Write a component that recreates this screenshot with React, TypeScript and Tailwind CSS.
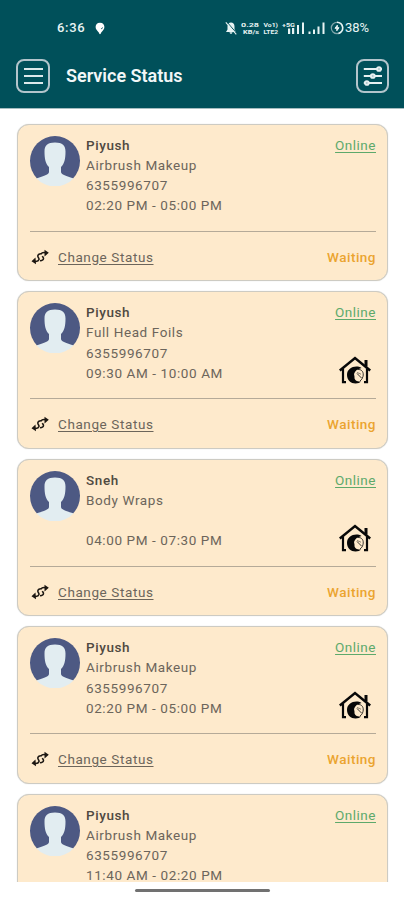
type Booking = {
  name: string;
  service: string;
  phone: string;
  time: string;
  home: boolean;
  status?: string;
};

const bookings: Booking[] = [
  { name: "Piyush", service: "Airbrush Makeup", phone: "6355996707", time: "02:20 PM - 05:00 PM", home: false, status: "Waiting" },
  { name: "Piyush", service: "Full Head Foils", phone: "6355996707", time: "09:30 AM - 10:00 AM", home: true, status: "Waiting" },
  { name: "Sneh", service: "Body Wraps", phone: "", time: "04:00 PM - 07:30 PM", home: true, status: "Waiting" },
  { name: "Piyush", service: "Airbrush Makeup", phone: "6355996707", time: "02:20 PM - 05:00 PM", home: true, status: "Waiting" },
  { name: "Piyush", service: "Airbrush Makeup", phone: "6355996707", time: "11:40 AM - 02:20 PM", home: false },
];

const Avatar = () => (
  <svg viewBox="0 0 50 50" className="h-[50px] w-[50px] shrink-0" aria-hidden="true">
    <path d="M7 42.400A25 25 0 1 1 43 42.400z" fill="#4d5983" />
    <path
      d="M25 6.500c7.500 0 10.500 2.800 10.500 9 0 7.500-1 12-4.500 15.500v5c0 3 7 4.500 12.500 6.400A25.300 25.300 0 0 1 6.500 42.400C12 40.500 19 39 19 36v-5c-3.500-3.500-4.500-8-4.500-15.500 0-6.200 3-9 10.500-9z"
      fill="#e2edf1"
    />
  </svg>
);

const SwapIcon = () => (
  <svg viewBox="0 0 20 16" className="h-4 w-5 shrink-0" fill="none" stroke="#1c1712" aria-hidden="true">
    <path
      d="M3 12c3 .8 5.500.2 6-1.500.4-1.400-1.400-2-1.200-3.600.2-1.500 1.700-2.300 3.400-2M17 4c-3-.8-5.400-.3-6 1.200M10 11.600c1.800.2 3.400-.6 3.500-2 .1-1-.7-1.500-1.200-2.500"
      strokeWidth="1.500"
    />
    <path d="M5.500 8.500 1.500 12.300 6 15.200zM14.500.8l4.300 3-4.300 3.700z" fill="#1c1712" stroke="none" />
  </svg>
);

const HomeServiceIcon = () => (
  <svg viewBox="0 0 32 28" className="h-7 w-8" fill="none" stroke="#080808" aria-hidden="true">
    <path d="M.8 14.500 16 2l15.200 12.500" strokeWidth="2.500" />
    <path d="M4 12.500v13.700h3M28 12.500v13.700h-3" strokeWidth="2.200" />
    <path d="M27 10.500V4" strokeWidth="3" />
    <path
      d="M22.500 12C17 8.500 8 11.500 8 19c0 5 4 8.500 8.500 8.500 2.500 0 4.500-.8 5.500-2-4 .2-6.800-1.500-6.500-4.300.2-1.500-.8-2.200-.3-3.700.8-2.700 3.500-4.500 7.300-5.500z"
      fill="#080808"
      stroke="none"
    />
    <path d="M18.500 13.500c4.500-.5 6.500 3 5.500 7-.5 2-1.500 3.500-3 4.500M18 17.500l4.500 4.500" strokeWidth=".8" />
    <path d="M18 16.500c1.500 1 3 .5 4 2" strokeWidth=".7" stroke="#4c463e" />
  </svg>
);

const StatusBar = () => (
  <div className="flex h-[20px] items-center pl-[57px] pr-[33px] text-[13px] font-medium text-[#e8f4f4]">
    <span className="w-[38px] tracking-[0.700px]">6:36</span>
    <svg viewBox="0 0 10 13" className="h-[13px] w-[10px]" aria-hidden="true">
      <path d="M5 .7C2 .7.600 2.800.600 5c0 2.400 2 4 3 5.300.7 1 .8 2 1.400 2 .7 0 .7-1 1.400-2C7.400 9 9.400 7.400 9.400 5 9.400 2.800 8 .7 5 .7z" fill="#fff" />
      <path d="m6 7 2-1.500" stroke="#00505a" strokeWidth=".8" />
    </svg>
    <div className="ml-auto flex items-center">
      <svg viewBox="0 0 101 14" className="h-[14px] w-[101px]" fill="#e8f4f4" aria-hidden="true">
        <path d="M1 11 2.500 8.500V5.500C2.500 3 4 1.600 6 1.500c2 .1 3.500 1.500 3.500 4v3L11 11zM4.500 11.300h3C7 13.300 5 13.300 4.500 11.300z" />
        <path d="m1.700.7 10.300 12" stroke="#00505a" strokeWidth="1" />
        <path d="m.8 1.300 10.500 12" stroke="#e8f4f4" strokeWidth="1.100" />
        <text x="16" y="6.300" fontSize="6" fontWeight="700" textLength="18" lengthAdjust="spacingAndGlyphs">0.28</text>
        <text x="18" y="13.300" fontSize="6" fontWeight="700" textLength="16" lengthAdjust="spacingAndGlyphs">KB/s</text>
        <text x="38.500" y="6.300" fontSize="6" fontWeight="700" textLength="14.500" lengthAdjust="spacingAndGlyphs">Vo1)</text>
        <text x="38.500" y="13.300" fontSize="6" fontWeight="700" textLength="14.500" lengthAdjust="spacingAndGlyphs">LTE2</text>
        <text x="57" y="6" fontSize="6" fontWeight="700" textLength="13" lengthAdjust="spacingAndGlyphs">+5G</text>
        <path d="M63 7.500h2.200V13H63zM67 7h2.200v6H67zM72 4h2v9h-2zM77 1.500h2v11.500h-2z" />
        <path d="M83.500 10.500h2v2.500h-2zM88 8.500h2v4.500h-2zM92.500 5.500h2V13h-2zM97.500 1.500h2v11.500h-2z" />
      </svg>
      <svg viewBox="0 0 14 14" className="ml-[4px] h-[14px] w-[14px]" fill="none" aria-hidden="true">
        <circle cx="7" cy="7" r="5.700" stroke="#7fa5aa" strokeWidth="1.200" />
        <path d="M7 1.300A5.700 5.700 0 0 1 8.500 12.500" stroke="#e8f4f4" strokeWidth="1.600" />
        <path d="M7.300 4.200 5 7.300h1.800v2.500L9 6.700H7.300z" fill="#e8f4f4" stroke="#e8f4f4" strokeWidth="1" />
      </svg>
      <span className="ml-[1px] w-[26px] whitespace-nowrap text-[13px] font-normal">38%</span>
    </div>
  </div>
);

const Header = () => (
  <header className="h-[108.500px] shrink-0 border-b border-[#a5bdc0] bg-[#00505a] pt-[18px]">
    <StatusBar />
    <div className="mt-[21px] flex items-center pl-4 pr-[15px]">
      <button aria-label="Menu" className="flex h-[34px] w-[34px] flex-col items-center justify-center gap-[5px] rounded-lg border-2 border-[#b3c5cc]">
        <span className="h-[2px] w-[19px] bg-[#dce9eb]" />
        <span className="h-[2px] w-[19px] bg-[#dce9eb]" />
        <span className="h-[2px] w-[19px] bg-[#dce9eb]" />
      </button>
      <h1 className="ml-[16px] text-[18px] font-semibold leading-6 text-[#f2f7f8]">Service Status</h1>
      <button aria-label="Filter" className="ml-auto flex h-[34px] w-[33px] items-center justify-center rounded-lg border-2 border-[#b3c5cc]">
        <svg viewBox="0 0 20 22" className="h-[22px] w-5" fill="#a9c4c8" stroke="#e6f0f1" strokeWidth="1.900">
          <path d="M.8 4h18.200M.8 11h18.200M.8 18h18.200" />
          <circle cx="16" cy="4" r="1.900" />
          <circle cx="9.800" cy="11" r="1.900" />
          <circle cx="3.800" cy="18" r="1.900" />
        </svg>
      </button>
    </div>
  </header>
);

const BookingCard = ({ item: { name, service, phone, time, home, status } }: { item: Booking }) => {
  return (
    <li className="h-[157.500px] shrink-0 rounded-[12px] border-[1.500px] border-[#cdcbc3] bg-[#feeacc] pl-3 pr-[11px] pt-[10px] text-[13.500px] text-[#6c655b] shadow-[0_0_1px_#c6c9c9]">
      <div className="flex h-[97px] border-b border-[#b5aa98]">
        <div className="pt-[1px]">
          <Avatar />
        </div>
        <div className="ml-[6px] flex-1 tracking-[0.600px] leading-[20.300px]">
          <h3 className="font-medium text-[#4f4941]">{name}</h3>
          <p>{service}</p>
          <p className="h-[20.300px]">{phone}</p>
          <p>{time}</p>
        </div>
        <div className="flex flex-col items-end">
          <a href="#" className="leading-[20.300px] tracking-[0.500px] text-[#5da96b] underline underline-offset-2">
            Online
          </a>
          {home && (
            <div className="mt-[34px] mr-[5px]">
              <HomeServiceIcon />
            </div>
          )}
        </div>
      </div>
      {status && (
        <div className="mt-[15px] flex items-center leading-5">
          <SwapIcon />
          <a href="#" className="ml-2 tracking-[0.600px] underline underline-offset-2">
            Change Status
          </a>
          <span className="ml-auto font-medium tracking-[0.500px] text-[#eba42f]">{status}</span>
        </div>
      )}
    </li>
  );
};

const App = () => {
  return (
    <div className="flex h-[900px] w-[404px] flex-col overflow-hidden bg-white font-[Roboto,sans-serif]">
      <Header />
      <main className="h-[773.500px] shrink-0 overflow-hidden pl-[17px] pr-4 pt-[15px]">
        <ul className="flex flex-col gap-[10px]">
          {bookings.map((item, index) => (
            <BookingCard item={item} key={index} />
          ))}
        </ul>
      </main>
      <div className="mx-auto mt-[7px] h-[3px] w-[135px] rounded-full bg-[#717171]" />
    </div>
  );
};

export default App;
